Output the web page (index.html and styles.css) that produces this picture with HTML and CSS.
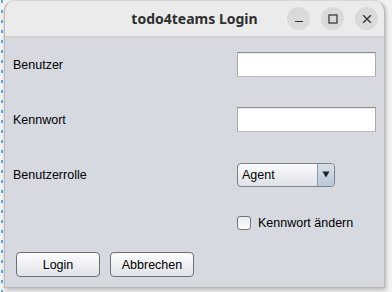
FILE: index.html
```html
<!DOCTYPE html>
<html lang="de">
<head>
<meta charset="utf-8">
<title>todo4teams Login</title>
<link rel="stylesheet" href="styles.css">
</head>
<body>
<div class="desktop">
  <div class="window">
    <div class="titlebar">
      <div class="title">todo4teams Login</div>
      <div class="controls">
        <span class="ctl"><svg width="10" height="10" viewBox="0 0 10 10"><path d="M1 7.5h8" stroke="#2e2e2e" stroke-width="1.2"/></svg></span>
        <span class="ctl"><svg width="10" height="10" viewBox="0 0 10 10"><rect x="1" y="1" width="8" height="8" fill="none" stroke="#2e2e2e" stroke-width="1.2"/></svg></span>
        <span class="ctl"><svg width="10" height="10" viewBox="0 0 10 10"><path d="M1.2 1.2L8.8 8.8M8.8 1.2L1.2 8.8" stroke="#2e2e2e" stroke-width="1.3"/></svg></span>
      </div>
    </div>
    <div class="content">
      <div class="row r1">
        <label class="lbl">Benutzer</label>
        <div class="field"></div>
      </div>
      <div class="row r2">
        <label class="lbl">Kennwort</label>
        <div class="field"></div>
      </div>
      <div class="row r3">
        <label class="lbl">Benutzerrolle</label>
        <div class="combo"><span class="combo-text">Agent</span><span class="combo-arrow"><svg width="8" height="7" viewBox="0 0 8 7"><path d="M0.5 0.5h7L4 6.5z" fill="#1e2328"/></svg></span></div>
      </div>
      <div class="row r4">
        <span class="lbl"></span>
        <div class="check"><span class="box"></span><span class="check-text">Kennwort ändern</span></div>
      </div>
      <div class="buttons">
        <button class="btn">Login</button>
        <button class="btn">Abbrechen</button>
      </div>
    </div>
  </div>
</div>
</body>
</html>
```
FILE: styles.css
```css
html, body {
  margin: 0;
  padding: 0;
}
body {
  width: 392px;
  height: 292px;
  overflow: hidden;
  background: #f3f3f3;
  font-family: "Liberation Sans", Arial, sans-serif;
}
.desktop {
  height: 292px;
  padding-left: 4px;
  box-sizing: border-box;
  background:
    repeating-linear-gradient(to bottom, #5aa6e8 0 3px, transparent 3px 10px) 1px 0 / 2px 100% no-repeat,
    #f3f3f3;
}
.window {
  width: 381px;
  height: 288px;
  box-sizing: border-box;
  border-radius: 11px 11px 0 0;
  border: 1px solid #b9b9b9;
  border-top-color: #d8d8d8;
  background: #d6d9df;
  overflow: hidden;
  box-shadow: 1px 2px 4px rgba(0,0,0,0.25);
  display: flex;
  flex-direction: column;
}
.titlebar {
  height: 35px;
  flex: none;
  background: #ebebeb;
  border-bottom: 1px solid #cdcdcd;
  display: flex;
  align-items: center;
  position: relative;
}
.title {
  position: absolute;
  left: 0;
  right: 0;
  text-align: center;
  font-family: "Noto Sans", "Open Sans", sans-serif;
  font-weight: 700;
  font-size: 14px;
  color: #2f2f2f;
}
.controls {
  margin-left: auto;
  margin-right: 6px;
  display: flex;
  gap: 11px;
  position: relative;
}
.ctl {
  width: 23px;
  height: 23px;
  border-radius: 50%;
  background: #dadada;
  display: flex;
  align-items: center;
  justify-content: center;
}
.content {
  flex: 1;
  padding: 15px 8px 0 8px;
  font-size: 12.5px;
  color: #000;
}
.row {
  display: flex;
  align-items: center;
  height: 25px;
}
.r2, .r3 {
  margin-top: 30px;
}
.r4 {
  margin-top: 23px;
}
.lbl {
  width: 224px;
  flex: none;
}
.field {
  width: 140px;
  height: 25px;
  box-sizing: border-box;
  background: #fff;
  border: 1px solid #aaaaaa;
  border-top-color: #8f8f8f;
  border-bottom-color: #bdbdbd;
  box-shadow: inset 0 1px 0 #ececec;
}
.combo {
  width: 98px;
  height: 24px;
  box-sizing: border-box;
  border: 1px solid #7c8087;
  border-radius: 4px;
  background: linear-gradient(#fbfbfc, #eceef2 50%, #dfe2e8);
  display: flex;
  overflow: hidden;
}
.combo-text {
  flex: 1;
  padding-left: 4px;
  line-height: 22px;
}
.combo-arrow {
  width: 16px;
  border-left: 1px solid #8e99a6;
  background: linear-gradient(#d6e0ea, #b9c8d6);
  display: flex;
  align-items: center;
  justify-content: center;
}
.check {
  display: flex;
  align-items: center;
  gap: 7px;
}
.box {
  width: 14px;
  height: 14px;
  box-sizing: border-box;
  border: 1px solid #70747b;
  border-radius: 3px;
  background: linear-gradient(#e9ebef, #fbfbfc);
}
.buttons {
  display: flex;
  gap: 10px;
  margin-top: 17px;
  padding-left: 3px;
}
.btn {
  width: 84px;
  height: 25px;
  box-sizing: border-box;
  border: 1px solid #6d7076;
  border-radius: 4px;
  background: linear-gradient(#fdfdfd, #eef0f3 50%, #dfe2e7);
  font-family: "Liberation Sans", Arial, sans-serif;
  font-size: 12.5px;
  color: #000;
  padding: 0;
}
```
